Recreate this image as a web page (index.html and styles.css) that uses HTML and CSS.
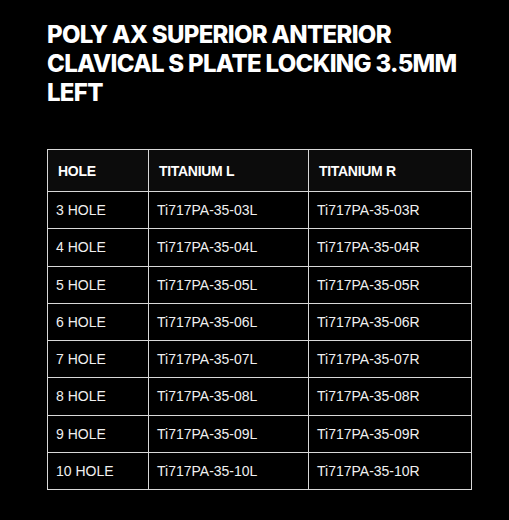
FILE: index.html
```html
<!DOCTYPE html>
<html>
<head>
<meta charset="utf-8">
<link rel="stylesheet" href="styles.css">
</head>
<body>
<div class="page">
  <h1 class="title">POLY AX SUPERIOR ANTERIOR CLAVICAL S PLATE LOCKING 3.5MM LEFT</h1>
  <table class="spec">
    <thead>
      <tr><th class="c1">HOLE</th><th class="c2">TITANIUM L</th><th class="c3">TITANIUM R</th></tr>
    </thead>
    <tbody>
      <tr><td>3 HOLE</td><td>Ti717PA-35-03L</td><td>Ti717PA-35-03R</td></tr>
      <tr><td>4 HOLE</td><td>Ti717PA-35-04L</td><td>Ti717PA-35-04R</td></tr>
      <tr><td>5 HOLE</td><td>Ti717PA-35-05L</td><td>Ti717PA-35-05R</td></tr>
      <tr><td>6 HOLE</td><td>Ti717PA-35-06L</td><td>Ti717PA-35-06R</td></tr>
      <tr><td>7 HOLE</td><td>Ti717PA-35-07L</td><td>Ti717PA-35-07R</td></tr>
      <tr><td>8 HOLE</td><td>Ti717PA-35-08L</td><td>Ti717PA-35-08R</td></tr>
      <tr><td>9 HOLE</td><td>Ti717PA-35-09L</td><td>Ti717PA-35-09R</td></tr>
      <tr><td>10 HOLE</td><td>Ti717PA-35-10L</td><td>Ti717PA-35-10R</td></tr>
    </tbody>
  </table>
</div>
</body>
</html>
```
FILE: styles.css
```css
html, body {
  margin: 0;
  padding: 0;
  background: #000;
}
.page {
  padding: 20px 38px 0 47px;
  color: #fff;
}
.title {
  margin: 0;
  font-family: Inter, "Open Sans", sans-serif;
  font-weight: 800;
  font-size: 24px;
  line-height: 29px;
  letter-spacing: -0.7px;
  color: #fff;
  width: 430px;
}
.spec {
  margin-top: 42px;
  border-collapse: collapse;
  width: 425px;
  font-family: "Liberation Sans", Arial, sans-serif;
  font-size: 14px;
  color: #f0f0f0;
}
.spec th, .spec td {
  border: 1px solid #d8d8d8;
  text-align: left;
  padding: 0 8px;
}
.spec th {
  height: 41px;
  background: #0c0c0c;
  font-weight: bold;
  font-size: 14px;
  letter-spacing: -0.3px;
  padding-left: 10px;
  color: #fff;
}
.spec td {
  height: 36.25px;
  background: #000;
}
.c1 { width: 82px; }
.c2 { width: 141px; }
```
